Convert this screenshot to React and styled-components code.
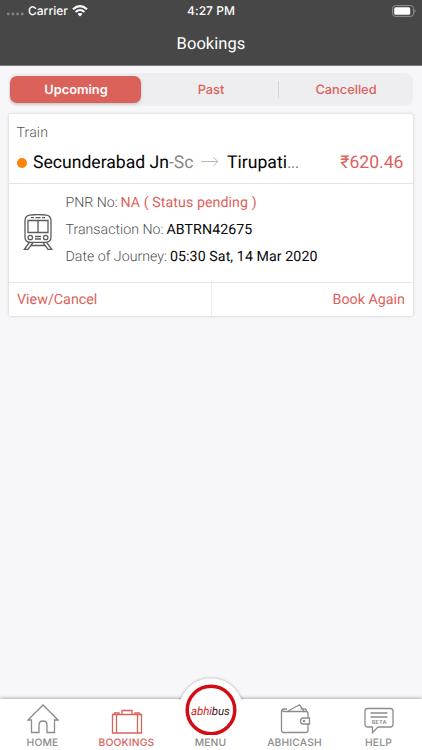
import styled, { createGlobalStyle } from "styled-components";

const GlobalStyle = createGlobalStyle`
  * {
    box-sizing: border-box;
  }
  body {
    margin: 0;
    background-color: #f7f7fa;
    font-family: Roboto, sans-serif;
    text-rendering: geometricPrecision;
  }
  button {
    text-rendering: inherit;
  }
`;

const Screen = styled.div`
  width: 422px;
  height: 750px;
  display: flex;
  flex-direction: column;
  overflow: hidden;
  background-color: #f7f7fa;
`;

const Header = styled.header`
  height: 66px;
  background-color: #474747;
  border-bottom: 1px solid #7a7a7a;
  color: white;
`;

const StatusBar = styled.div`
  height: 22px;
  padding: 0 6px;
  display: grid;
  grid-template-columns: 1fr auto 1fr;
  align-items: center;
  font: 500 12px/20px Inter, sans-serif;
`;

const Carrier = styled.div`
  display: flex;
  align-items: center;
  gap: 4px;
`;

const Clock = styled.span`
  letter-spacing: 0.05px;
`;

const Battery = styled.svg`
  justify-self: end;
`;

const Title = styled.h1`
  margin: 0;
  font-size: 16.5px;
  font-weight: 400;
  line-height: 46px;
  text-align: center;
  letter-spacing: 0.05px;
`;

const Main = styled.main`
  flex: 1;
  padding: 7px 9px 0;
`;

const Tabs = styled.div`
  display: grid;
  grid-template-columns: 133px 1fr 135px;
  height: 33px;
  padding: 3px 0 3px 1px;
  margin-bottom: 8px;
  border-radius: 8px;
  background-color: #eeeef0;
`;

const Tab = styled.button`
  position: relative;
  height: 27px;
  margin: 0 ${(p) => (p.$active ? "2px" : "0")} 0 0;
  padding: 2px 0 0 1px;
  border: none;
  border-radius: 7px;
  background-color: ${(p) => (p.$active ? "#db625b" : "transparent")};
  box-shadow: ${(p) => (p.$active ? "0 1px 3px rgba(0, 0, 0, 0.2)" : "none")};
  color: ${(p) => (p.$active ? "white" : "#db625b")};
  font: ${(p) => (p.$active ? 600 : 450)} 12.8px/25px Inter, sans-serif;

  &:last-child::before {
    content: "";
    position: absolute;
    left: 0;
    top: 5px;
    height: 17px;
    border-left: 1px solid #d4d4d7;
  }
`;

const Card = styled.section`
  height: 202px;
  background-color: white;
  border-radius: 2px;
  box-shadow: 0 0 3px rgba(0, 0, 0, 0.22);
`;

const CardTop = styled.div`
  height: 70px;
  padding: 9px 9.5px 0 7.5px;
  border-bottom: 1px solid #e4e4e4;
`;

const Type = styled.div`
  color: #555;
  font-size: 14.2px;
  font-weight: 300;
  line-height: 21px;
  letter-spacing: 0.1px;
`;

const Route = styled.div`
  display: flex;
  align-items: center;
  height: 37px;
  font-size: 17.6px;
  color: #050505;
  white-space: nowrap;
`;

const Dot = styled.span`
  width: 10px;
  height: 10px;
  margin-right: 6.5px;
  border-radius: 50%;
  background-color: #fb850c;
`;

const From = styled.span`
  width: 161px;
`;

const Muted = styled.span`
  color: #888;
  letter-spacing: ${(p) => p.$spacing || 0}px;
`;

const Arrow = styled.svg`
  width: 18px;
  height: 10px;
  margin: 0 8px 2px 7px;
`;

const Price = styled.span`
  margin-left: auto;
  color: #db625b;
`;

const Details = styled.div`
  display: flex;
  height: 99px;
  padding: 6px 0 0 13.5px;
  border-bottom: 1px solid #e8e8e8;
`;

const TrainIcon = styled.svg`
  margin: 24px 13px 0 0;
`;

const Line = styled.div`
  display: flex;
  height: 27px;
  line-height: 27px;
  font-size: 14.2px;
  white-space: nowrap;
`;

const Label = styled.span`
  width: ${(p) => p.$width}px;
  font-weight: 300;
  color: #505050;
`;

const Value = styled.span`
  color: ${(p) => (p.$pending ? "#db625b" : "#080808")};
  letter-spacing: 0.08px;
`;

const Actions = styled.div`
  display: grid;
  grid-template-columns: 202px 1fr;
  height: 33px;
`;

const Action = styled.button`
  padding: 0 8px;
  border: none;
  background: none;
  color: #db625b;
  font: 400 14.3px/32px Roboto, sans-serif;
  text-align: ${(p) => p.$align};

  & + & {
    border-left: 1px solid #ececec;
  }
`;

const BottomNav = styled.nav`
  position: relative;
  display: grid;
  grid-template-columns: repeat(5, 84px);
  padding-left: 0.5px;
  height: 51px;
  background-color: white;
  box-shadow: 0 0 4px rgba(0, 0, 0, 0.45);
`;

const NavItem = styled.a`
  position: relative;
  display: flex;
  flex-direction: column;
  align-items: center;
  justify-content: space-between;
  padding: 4px 0 0;
  color: ${(p) => (p.$active ? "#db625b" : "#8c8c8c")};
  font: 450 10.3px/14px Inter, sans-serif;
  letter-spacing: 0.15px;

  svg {
    fill: none;
    stroke: currentColor;
    stroke-width: 1.3;
  }
`;

const MenuButton = styled.div`
  position: absolute;
  left: 8px;
  top: -25px;
  width: 68px;
  height: 61px;

  svg {
    display: block;
  }
`;

const MenuLabel = styled.span`
  position: relative;
  margin-top: auto;
`;

export default function App() {
  return (
    <>
      <GlobalStyle />
      <Screen>
        <Header>
          <StatusBar>
            <Carrier>
              <svg width="18" height="14" fill="#858585">
                <circle cx="2.2" cy="10" r="1.4" />
                <circle cx="7" cy="10" r="1.4" />
                <circle cx="11.6" cy="10" r="1.4" />
                <circle cx="16.2" cy="10" r="1.4" />
              </svg>
              <span>Carrier</span>
              <svg width="16" height="12" viewBox="0 0 16 12" fill="none" stroke="white" strokeWidth="2.1">
                <path d="M1 4.3 Q8 -2 15 4.3" />
                <path d="M3.6 7 Q8 3 12.4 7" />
                <path d="M8 11.6 L5.5 9 Q8 6.9 10.5 9 Z" fill="white" stroke="none" />
              </svg>
            </Carrier>
            <Clock>4:27 PM</Clock>
            <Battery width="25" height="12" viewBox="0 0 25 12">
              <rect x="1.6" y="0.6" width="21" height="10.8" rx="3" fill="none" stroke="#949494" />
              <rect x="3.2" y="2.2" width="16" height="7.6" rx="1.5" fill="white" />
              <path d="M23.6 4 Q25.5 6 23.6 8Z" fill="#949494" />
            </Battery>
          </StatusBar>
          <Title>Bookings</Title>
        </Header>

        <Main>
          <Tabs>
            <Tab $active>Upcoming</Tab>
            <Tab>Past</Tab>
            <Tab>Cancelled</Tab>
          </Tabs>

          <Card>
            <CardTop>
              <Type>Train</Type>
              <Route>
                <Dot />
                <From>
                  Secunderabad Jn<Muted>-Sc</Muted>
                </From>
                <Arrow viewBox="0 0 18 10" fill="none" stroke="#b0b0b0" strokeWidth="0.9">
                  <path d="M0 4.5H17M12.5 0.5L17 4.5L12.5 8.5" />
                </Arrow>
                <span>
                  Tirupati<Muted $spacing={-0.7}>...</Muted>
                </span>
                <Price>₹620.46</Price>
              </Route>
            </CardTop>

            <Details>
              <TrainIcon width="30" height="37" viewBox="0 0 30 37" fill="none" stroke="#5c5c5c" strokeWidth="1.3">
                <path d="M6.5 1.2Q15-.2 23.5 1.2Q28 2 28 7V23Q28 28.3 22.5 28.3H7.5Q2 28.3 2 23V7Q2 2 6.5 1.2Z" />
                <path d="M5 6.5H25V18.5H5ZM15 6.5V18.5M8 3.7H11M12.5 3.7H17.5M19 3.7H22" />
                <circle cx="7.3" cy="23.5" r="2.2" />
                <circle cx="22.7" cy="23.5" r="2.2" />
                <path d="M12 22.5H18M12 25H18M6.3 28.5L1.3 35.3H5L10 28.5M23.7 28.5L28.7 35.3H25L20 28.5M8 31.5H22" />
              </TrainIcon>
              <div>
                <Line>
                  <Label $width={55}>PNR No:</Label>
                  <Value $pending>NA ( Status pending )</Value>
                </Line>
                <Line>
                  <Label $width={101}>Transaction No:</Label>
                  <Value>ABTRN42675</Value>
                </Line>
                <Line>
                  <Label $width={104.5}>Date of Journey:</Label>
                  <Value>05:30 Sat, 14 Mar 2020</Value>
                </Line>
              </div>
            </Details>

            <Actions>
              <Action $align="left">View/Cancel</Action>
              <Action $align="right">Book Again</Action>
            </Actions>
          </Card>
        </Main>

        <BottomNav>
          <NavItem>
            <svg width="32" height="32" viewBox="0 0 32 32">
              <path d="M1 17L16 2L31 17H27.5V29.5H20V22Q20 18 16 18T12 22V29.5H4.5V17Z" />
            </svg>
            HOME
          </NavItem>
          <NavItem $active>
            <svg width="32" height="32" viewBox="0 0 32 32">
              <path d="M1.5 11.5H30.5V30H1.5ZM5.5 11.5V30M26.5 11.5V30M11 11.5V7.5H21V11.5M3.5 11.5V9.8H8V11.5M24 11.5V9.8H28.5V11.5" />
            </svg>
            BOOKINGS
          </NavItem>
          <NavItem>
            <MenuButton>
              <svg width="68" height="61" viewBox="0 0 68 61">
                <defs>
                  <filter id="bump" x="-20%" y="-20%" width="140%" height="140%">
                    <feDropShadow dx="0" dy="0" stdDeviation="1.7" floodColor="#000" floodOpacity="0.42" />
                  </filter>
                  <clipPath id="above">
                    <rect x="-5" y="-5" width="78" height="31" />
                  </clipPath>
                </defs>
                <g clipPath="url(#above)" stroke="none">
                  <path d="M0 35V30Q3 27 5 23A32 32 0 0 1 63 23Q65 27 68 30V35Z" fill="white" filter="url(#bump)" />
                </g>
                <circle cx="34" cy="36" r="23.8" fill="white" stroke="#d10d18" strokeWidth="3.5" />
                <text
                  x="14"
                  y="40.5"
                  fontFamily="Roboto, sans-serif"
                  fontSize="11.5"
                  fontStyle="italic"
                  fontWeight="400"
                  stroke="none"
                  fill="#c91f2a"
                  textLength="39"
                  lengthAdjust="spacing"
                >
                  abhi<tspan fill="#3b2025">bus</tspan>
                </text>
              </svg>
            </MenuButton>
            <MenuLabel>MENU</MenuLabel>
          </NavItem>
          <NavItem>
            <svg width="32" height="32" viewBox="0 0 32 32">
              <path d="M8 6H5Q2.5 6 2.5 8.5V27Q2.5 29.5 5 29.5H26.5Q29 29.5 29 27V21M29 15V10.5Q29 8.5 27 8.5H5Q3.5 8.5 3 7" />
              <path d="M8.5 8.2L20.5 1.8L25 8.2M21.5 5.8H26Q27.5 6 27.5 8.5" />
              <path d="M30.5 15H24.5Q21.5 15 21.5 18T24.5 21H30.5Z" />
              <circle cx="25" cy="18" r="0.6" />
            </svg>
            ABHICASH
          </NavItem>
          <NavItem>
            <svg width="32" height="32" viewBox="0 0 32 32">
              <path d="M4.8 5.5H27.2Q30 5.5 30 8.3V21.2Q30 24 27.2 24H15L9.5 29.7V24H4.8Q2 24 2 21.2V8.3Q2 5.5 4.8 5.5ZM7.5 10H24.5M7.5 14H24.5" />
              <text x="8.7" y="21.2" fontFamily="Inter, sans-serif" fontSize="5.6" fontWeight="600" fill="currentColor" stroke="none">
                BETA
              </text>
            </svg>
            HELP
          </NavItem>
        </BottomNav>
      </Screen>
    </>
  );
}
